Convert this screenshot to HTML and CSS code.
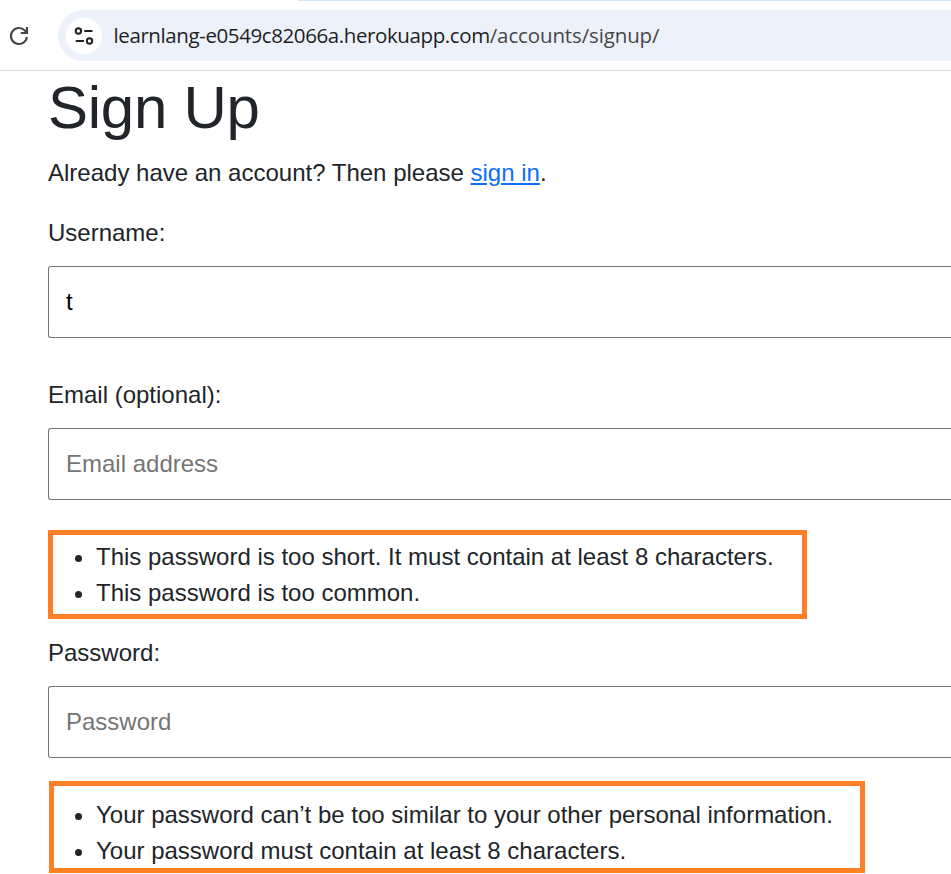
FILE: index.html
```html
<!DOCTYPE html>
<html lang="en">
<head>
<meta charset="utf-8">
<title>Sign Up</title>
<link rel="stylesheet" href="styles.css">
</head>
<body>
<header class="toolbar">
  <svg class="reload" width="22" height="22" viewBox="0 0 22 22" fill="none" stroke="#474747" stroke-width="2.1">
    <path d="M18.9 12A8 8 0 1 1 16.6 5.3L18.6 7.4"/>
    <path d="M19 2V8H12.8" />
  </svg>
  <div class="address">
    <span class="site-info">
      <svg width="20" height="20" viewBox="0 0 20 20" fill="none" stroke="#1f1f1f" stroke-width="2">
        <circle cx="4.4" cy="5" r="2.7"/><path d="M10.3 5h8.2"/>
        <circle cx="15.5" cy="15" r="2.7"/><path d="M1.7 15H10"/>
      </svg>
    </span>
    <span class="url"><span class="host">learnlang-e0549c82066a.herokuapp.com</span><span class="path">/accounts/signup/</span></span>
  </div>
  <span class="tab-edge"></span>
</header>
<main class="page">
  <h1>Sign Up</h1>
  <p class="intro">Already have an account? Then please <a href="#">sign in</a>.</p>
  <form>
    <div class="field">
      <label for="username">Username:</label>
      <input id="username" type="text" value="t">
    </div>
    <div class="field email">
      <label for="email">Email (optional):</label>
      <input id="email" type="email" placeholder="Email address">
    </div>
    <ul class="notes errors">
      <li>This password is too short. It must contain at least 8 characters.</li>
      <li>This password is too common.</li>
    </ul>
    <div class="field password">
      <label for="password">Password:</label>
      <input id="password" type="password" placeholder="Password">
    </div>
    <ul class="notes help">
      <li>Your password can’t be too similar to your other personal information.</li>
      <li>Your password must contain at least 8 characters.</li>
    </ul>
  </form>
</main>
</body>
</html>
```
FILE: styles.css
```css
* { box-sizing: border-box; }
html { overflow: hidden; }
body {
  margin: 0;
  background: #fff;
  color: #212529;
  font: 24px/36px "Liberation Sans", Arial, sans-serif;
  height: 874px;
  overflow: hidden;
}
.toolbar {
  position: relative;
  display: flex;
  height: 71px;
  padding: 10px 0 9px 8px;
  border-bottom: 1px solid #dcdcdc;
}
.tab-edge {
  position: absolute;
  top: 0;
  left: 298px;
  right: 0;
  height: 1px;
  background: #d3e3fd;
}
.reload { flex: none; margin: 15px 28px 0 0; }
.address {
  flex: 1;
  display: flex;
  align-items: center;
  height: 51px;
  padding-left: 8px;
  border-radius: 26px 0 0 26px;
  background: #ecf1fa;
}
.site-info {
  display: flex;
  align-items: center;
  justify-content: center;
  width: 36px;
  height: 36px;
  margin-right: 11.5px;
  border-radius: 50%;
  background: #fff;
}
.url {
  padding-bottom: 2px;
  font: 20.5px/30px "Open Sans", "Noto Sans", sans-serif;
  white-space: nowrap;
}
.host { color: #1f1f1f; letter-spacing: -0.4px; }
.path { color: #474747; letter-spacing: -0.13px; }
.page { padding-left: 48px; }
h1 { margin: 0 0 10px; font-size: 60px; font-weight: 400; line-height: 74px; letter-spacing: -0.25px; }
.intro { margin: 0 0 24px; }
a { color: #0d6efd; text-decoration: underline; }
.field { display: flex; flex-direction: column; gap: 15px; margin-bottom: 39px; }
.email { margin-bottom: 30px; }
.password { margin-bottom: 23px; }
input {
  width: 100%;
  height: 72px;
  margin: 0;
  padding: 0 17px;
  border: 1px solid #767676;
  border-right: 0;
  border-radius: 3px 0 0 3px;
  background: #fff;
  color: #000;
  font: inherit;
}
input::placeholder { color: #757575; }
.notes { margin: 0; border: 5px solid #ff7f27; }
.errors { width: 759px; height: 89px; margin-bottom: 16px; padding: 4px 0 0 43px; }
.help { width: 816px; height: 92px; margin-left: 1px; padding: 11px 0 0 42px; }
```
